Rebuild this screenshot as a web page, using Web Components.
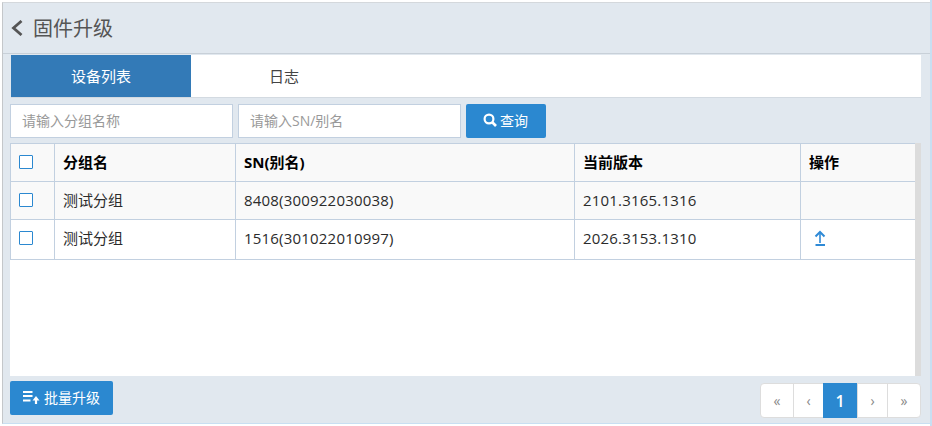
<!DOCTYPE html>
<html>
<head>
<meta charset="utf-8">
<style>
html, body { margin: 0; height: 100%; background: #fff; }
body { font-family: "Open Sans", "Noto Sans CJK SC", sans-serif; overflow: hidden; }
</style>
</head>
<body>
<fw-page>
  <fw-header slot="header" title="固件升级"></fw-header>
  <fw-tabs slot="tabs" active="设备列表" other="日志"></fw-tabs>
  <fw-search slot="search"></fw-search>
  <fw-table slot="table"></fw-table>
  <fw-footer slot="footer"></fw-footer>
</fw-page>
<script>
class FwPage extends HTMLElement {
    constructor() {
        super();
        this.attachShadow({ mode: "open" });
        this.shadowRoot.innerHTML = `
        <style>
            :host {
                display: block;
                box-sizing: border-box;
                width: 932px;
                height: 426px;
                padding: 2px;
                background: linear-gradient(to left, #c8dff2 2px, #fff 2px);
            }
            .frame {
                display: flex;
                flex-direction: column;
                box-sizing: border-box;
                height: 100%;
                background: #e1e8ef;
                border-top: 1px solid #d4d8dc;
                border-left: 1px solid #c4c7ca;
                border-bottom: 1px solid #c8dff2;
            }
            .body { flex: 1; display: flex; flex-direction: column; min-height: 0; padding: 0 9px 0 7px; }
        </style>
        <div class="frame">
            <slot name="header"></slot>
            <div class="body">
                <slot name="tabs"></slot>
                <slot name="search"></slot>
                <slot name="table"></slot>
                <slot name="footer"></slot>
            </div>
        </div>
      `;
    }
}

class FwHeader extends HTMLElement {
    constructor() {
        super();
        this.attachShadow({ mode: "open" });
    }
    connectedCallback() {
        this.shadowRoot.innerHTML = `
        <style>
            :host { display: flex; align-items: center; box-sizing: border-box; height: 51px; padding-left: 8px; border-bottom: 1px solid #c8d0d8; color: #555; font-size: 20px; }
            svg { margin-right: 10px; }
            span { padding-bottom: 2px; }
        </style>
        <svg width="12" height="16" viewBox="0 0 12 16"><path d="M10.5 1 L2.5 8 L10.5 15" fill="none" stroke="#555" stroke-width="2.8"/></svg>
        <span>${this.getAttribute("title")}</span>
      `;
    }
}

class FwTabs extends HTMLElement {
    constructor() {
        super();
        this.attachShadow({ mode: "open" });
    }
    connectedCallback() {
        this.shadowRoot.innerHTML = `
        <style>
            :host { display: flex; box-sizing: content-box; height: 42px; margin: 1px 0 0 1px; background: #fff; border-bottom: 1px solid #d3dae1; font-size: 15px; }
            div { display: flex; align-items: center; justify-content: center; color: #444; padding-bottom: 1px; }
            .on { width: 180px; background: #337ab7; color: #fff; }
            .off { width: 186px; }
        </style>
        <div class="on">${this.getAttribute("active")}</div>
        <div class="off">${this.getAttribute("other")}</div>
      `;
    }
}

class FwSearch extends HTMLElement {
    constructor() {
        super();
        this.attachShadow({ mode: "open" });
        this.shadowRoot.innerHTML = `
        <style>
            :host { display: flex; gap: 5px; height: 34px; margin: 6px 0 5px; font-size: 14px; }
            .inp { box-sizing: border-box; width: 223px; height: 34px; padding: 0 11px 2px; display: flex; align-items: center; background: #fff; border: 1px solid #c2d0e0; color: #999; }
            button { box-sizing: border-box; width: 80px; height: 34px; padding: 0 0 2px; border: 0; border-radius: 2px; background: #2b88d0; color: #fff; font: inherit; display: flex; align-items: center; justify-content: center; gap: 3px; }
            svg { margin-left: -1px; }
        </style>
        <div class="inp">请输入分组名称</div>
        <div class="inp">请输入SN/别名</div>
        <button>
            <svg width="14" height="14" viewBox="0 0 14 14"><circle cx="6" cy="6" r="4.4" fill="none" stroke="#fff" stroke-width="2.2"/><path d="M9 9 L13 13" stroke="#fff" stroke-width="2.6"/></svg>
            查询
        </button>
      `;
    }
}

class FwCheck extends HTMLElement {
    constructor() {
        super();
        this.attachShadow({ mode: "open" });
        this.shadowRoot.innerHTML = `
        <style>
            :host { display: block; box-sizing: border-box; width: 14px; height: 14px; border: 1px solid #2b88d0; border-radius: 1px; background: #fff; }
        </style>
      `;
    }
}

class FwTable extends HTMLElement {
    constructor() {
        super();
        this.attachShadow({ mode: "open" });
    }
    connectedCallback() {
        var rows = [
            ["测试分组", "8408(300922030038)", "2101.3165.1316", false],
            ["测试分组", "1516(301022010997)", "2026.3153.1310", true]
        ];
        var body = rows.map(function(r) {
            var up = r[3] ? `<svg class="up" width="12" height="16" viewBox="0 0 12 16"><path d="M6 2 V13" fill="none" stroke="#2f8ad6" stroke-width="1.6"/><path d="M1.5 6.5 L6 2 L10.5 6.5" fill="none" stroke="#2f8ad6" stroke-width="2"/><path d="M1.5 15 H11" stroke="#2f8ad6" stroke-width="2"/></svg>` : "";
            return `<tr><td class="c"><fw-check></fw-check></td><td>${r[0]}</td><td class="num">${r[1]}</td><td class="num">${r[2]}</td><td>${up}</td></tr>`;
        }).join("");
        this.shadowRoot.innerHTML = `
        <style>
            :host { display: flex; flex: 1; min-height: 0; font-size: 15px; color: #2b2b2b; }
            .view { width: 905px; background: #fff; }
            .track { width: 6px; background: #dcdcdc; }
            table { border-collapse: collapse; table-layout: fixed; width: 905px; }
            th, td { border: 1px solid #c2d0e0; padding: 8px 8px 0; line-height: 20px; vertical-align: top; text-align: left; height: 38px; box-sizing: border-box; }
            th { color: #000; font-weight: 700; background: #f9f9f9; }
            tbody tr:nth-child(1) td { background: #f9f9f9; }
            tbody tr:nth-child(2) td { height: 40px; }
            .c { padding: 11px 0 0 8px; }
            .num { letter-spacing: 0.2px; }
            .up { display: block; margin: 2px 0 0 5px; }
        </style>
        <div class="view">
            <table>
                <colgroup><col style="width:44px"><col style="width:181px"><col style="width:339px"><col style="width:226px"><col style="width:115px"></colgroup>
                <thead><tr><th class="c"><fw-check></fw-check></th><th>分组名</th><th>SN(别名)</th><th>当前版本</th><th>操作</th></tr></thead>
                <tbody>${body}</tbody>
            </table>
        </div>
        <div class="track"></div>
      `;
    }
}

class FwFooter extends HTMLElement {
    constructor() {
        super();
        this.attachShadow({ mode: "open" });
        this.shadowRoot.innerHTML = `
        <style>
            :host { display: flex; justify-content: space-between; align-items: flex-start; height: 47px; box-sizing: border-box; font-size: 14px; }
            button { box-sizing: border-box; width: 103px; height: 34px; margin-top: 5px; border: 0; padding: 0 0 2px; border-radius: 2px; background: #2b88d0; color: #fff; font: inherit; display: flex; align-items: center; justify-content: center; gap: 4px; }
            .pager { display: flex; height: 35px; margin-top: 7px; background: #fff; border: 1px solid #ddd; border-radius: 4px; box-sizing: border-box; color: #888; font-size: 14px; }
            .pager span { width: 32px; display: flex; align-items: center; justify-content: center; border-left: 1px solid #ddd; }
            .pager span:first-child { border-left: 0; }
            .pager .nar { width: 29px; }
            .pager .on { width: 34px; background: #2b88d0; color: #fff; font-size: 16px; font-weight: 600; border: 0; margin: -1px 0; }
        </style>
        <button>
            <svg width="17" height="13" viewBox="0 0 17 13"><path d="M0 1 H9.5 M0 5 H9.5 M0 9.5 H7.5" stroke="#fff" stroke-width="1.8"/><path d="M13 13 V8" stroke="#fff" stroke-width="2.2"/><path d="M9.5 9.5 L13 5 L16.5 9.5 Z" fill="#fff"/></svg>
            批量升级
        </button>
        <div class="pager"><span>«</span><span class="nar">‹</span><span class="on">1</span><span class="nar">›</span><span>»</span></div>
      `;
    }
}

customElements.define("fw-page", FwPage);
customElements.define("fw-header", FwHeader);
customElements.define("fw-tabs", FwTabs);
customElements.define("fw-search", FwSearch);
customElements.define("fw-check", FwCheck);
customElements.define("fw-table", FwTable);
customElements.define("fw-footer", FwFooter);
</script>
</body>
</html>
